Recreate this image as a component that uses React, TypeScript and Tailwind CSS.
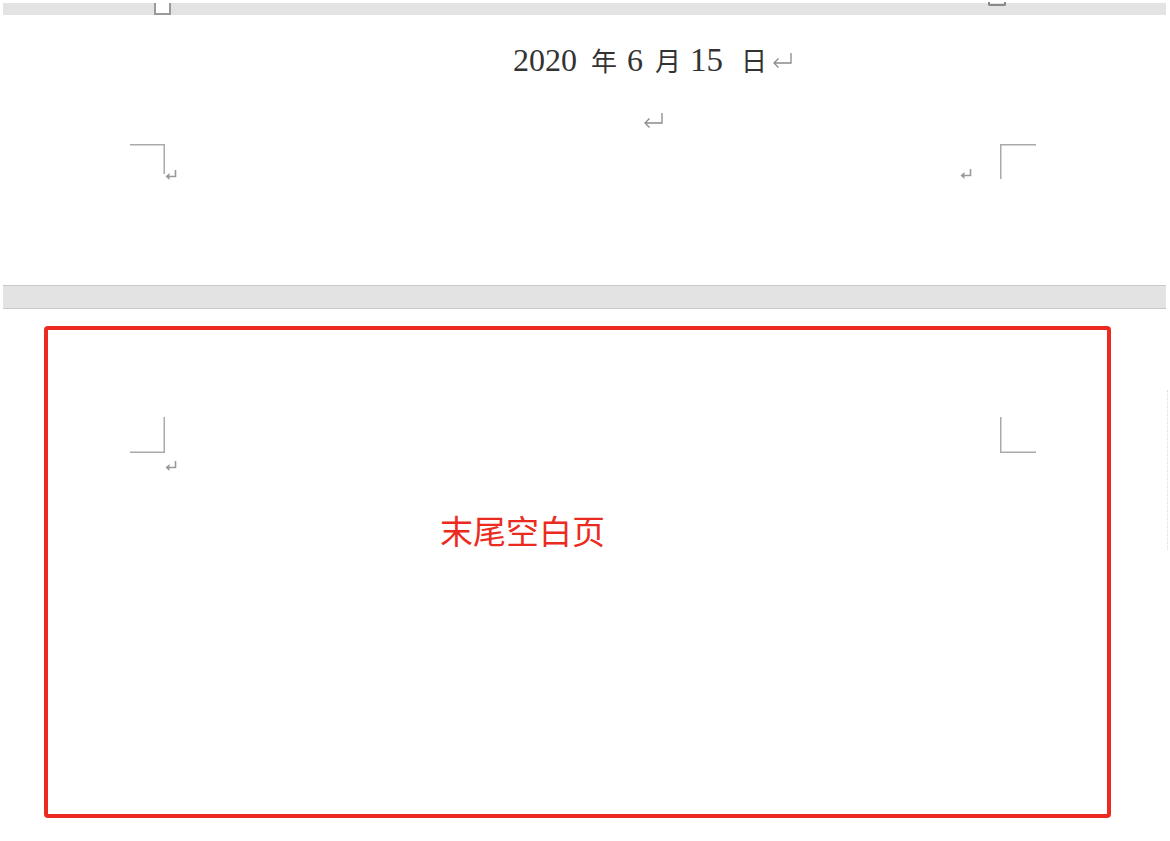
import React from 'react';

const serif = { fontFamily: '"Liberation Serif", "Noto Sans CJK SC", serif' };

const ReturnMark: React.FC<{ className?: string }> = ({ className }) => (
  <svg width="21" height="16" viewBox="0 0 21 16" className={className} fill="none">
    <path d="M19 1 V11 H2" stroke="#8a8a8a" strokeWidth="1.3" />
    <path d="M6.5 6.5 L2 11 L6.5 15.5" stroke="#8a8a8a" strokeWidth="1.3" />
  </svg>
);

// tiny return arrow Word draws next to the corner marks
const SmallReturn: React.FC<{ x: number; y: number }> = ({ x, y }) => (
  <g transform={`translate(${x} ${y})`}>
    <path d="M10.5 0 V6.5 H3" stroke="#9a9a9a" strokeWidth="1.6" fill="none" />
    <path d="M0.5 6.5 L4.5 3 V10 Z" fill="#9a9a9a" />
  </g>
);

const DateLine: React.FC = () => (
  <div className="flex items-baseline h-[32px] leading-[32px] text-[#333]">
    <span className="ml-[513px] text-[32px]" style={serif}>2020</span>
    <span className="ml-[14px] text-[26px]">年</span>
    <span className="ml-[10px] text-[32px]" style={serif}>6</span>
    <span className="ml-[12px] text-[26px]">月</span>
    <span className="ml-[9px] text-[33px]" style={serif}>15</span>
    <span className="ml-[18px] text-[26px]">日</span>
    <ReturnMark className="ml-[5px] self-center" />
  </div>
);

export default function App() {
  return (
    <div
      className="relative w-[1170px] h-[841px] overflow-hidden bg-white"
      style={{ fontFamily: '"Noto Sans CJK SC", "Noto Sans", sans-serif' }}
    >
      {/* first page (bottom part) */}
      <div className="flex flex-col h-[285px]">
        <div className="relative mt-[3px] ml-[3px] mr-[4px] h-[12px] bg-[#e3e3e3]">
          <div className="absolute left-[151px] top-0 w-[17px] h-[12px] bg-white border-x-2 border-b-2 border-[#9a9a9a]" />
          <div className="absolute left-[985px] -top-[1px] w-[18px] h-[4px] border-x-2 border-b-2 border-[#8a8a8a] rounded-b-[2px]" />
        </div>

        <div className="mt-[29px]">
          <DateLine />
        </div>

        <div className="mt-[36px] pl-[643px]">
          <ReturnMark />
        </div>

        <div className="mt-[16px] flex justify-between">
          <svg width="50" height="37" className="ml-[130px]">
            <path d="M0 0.75 H34.25 V30" stroke="#aaaaaa" strokeWidth="1.5" fill="none" />
            <SmallReturn x={35} y={26} />
          </svg>
          <svg width="76" height="37" className="mr-[134px]">
            <SmallReturn x={0} y={25} />
            <path d="M40.75 35 V0.75 H76" stroke="#aaaaaa" strokeWidth="1.5" fill="none" />
          </svg>
        </div>
      </div>

      {/* page gap */}
      <div className="ml-[3px] mr-[4px] h-[24px] bg-[#e3e3e3] border-y border-[#c8c8c8]" />

      {/* last, empty page */}
      <div className="flex flex-col">
        <div className="mt-[108px] flex justify-between">
          <svg width="50" height="57" className="ml-[130px]">
            <path d="M0 35.25 H34.25 V0" stroke="#aaaaaa" strokeWidth="1.5" fill="none" />
            <SmallReturn x={35} y={44} />
          </svg>
          <svg width="36" height="37" className="mr-[134px]">
            <path d="M0.75 0 V35.25 H36" stroke="#aaaaaa" strokeWidth="1.5" fill="none" />
          </svg>
        </div>

        <div className="mt-[40px] pl-[440px] text-[33px] leading-[33px] text-[#ec2b20]">
          末尾空白页
        </div>
      </div>

      <div className="absolute right-[2px] top-[390px] h-[160px] border-r border-dotted border-[#dcdcdc]" />

      {/* annotation box */}
      <div className="absolute left-[44px] top-[326px] w-[1067px] h-[492px] border-4 border-[#ec2b20] rounded-[4px]" />
    </div>
  );
}
